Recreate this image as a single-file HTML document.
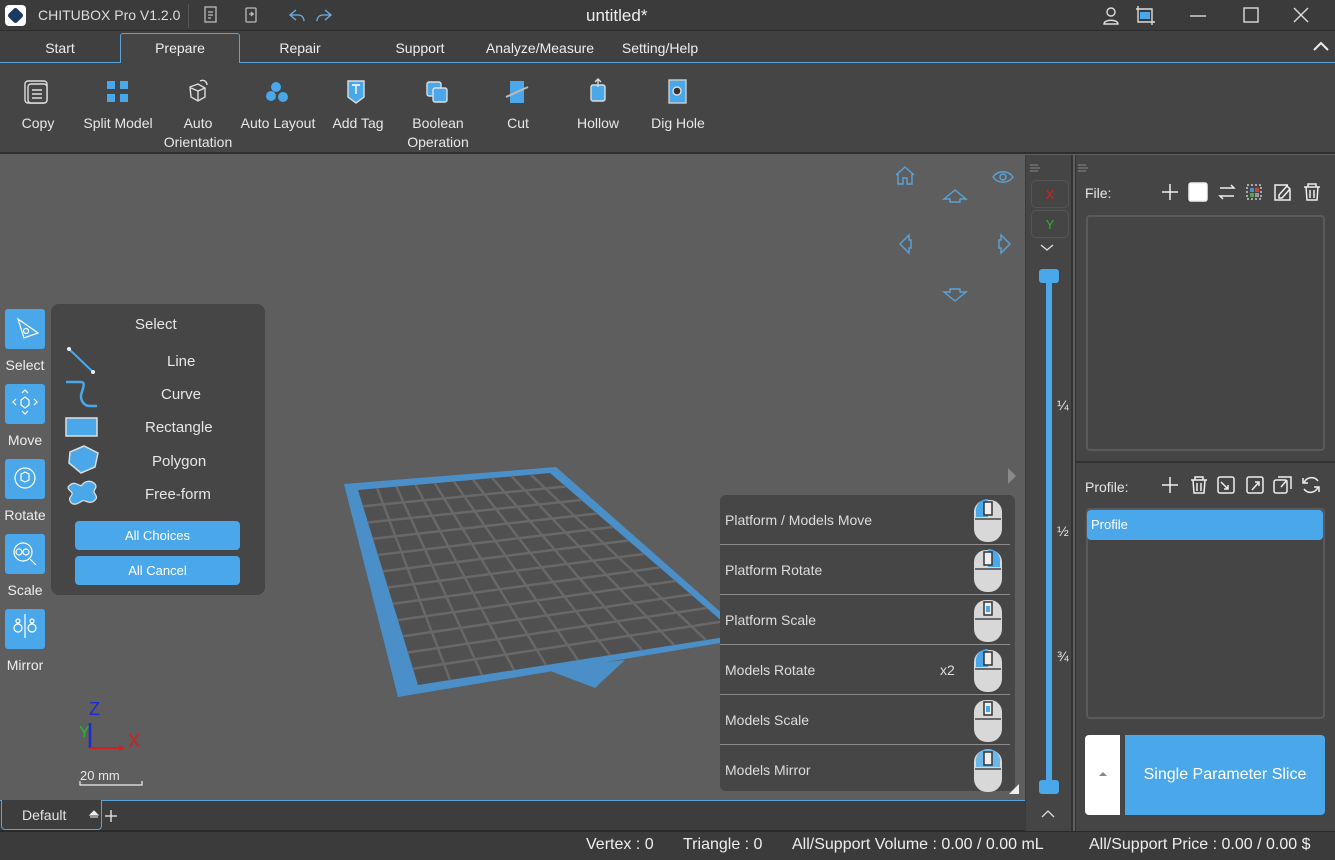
<!DOCTYPE html>
<html><head><meta charset="utf-8"><style>
*{margin:0;padding:0;box-sizing:border-box}
body{width:1335px;height:860px;overflow:hidden;background:#5e5e5e;font-family:"Liberation Sans",sans-serif;color:#e6e6e6;position:relative;font-size:14px}
.a{position:absolute}
.t{position:absolute;white-space:nowrap}
.tb{left:0;top:0;width:1335px;height:31px;background:#3b3b3b;border-bottom:1px solid #2c2c2c}
.tabs{left:0;top:31px;width:1335px;height:32px;background:#404040;border-bottom:1px solid #5aa3d8}
.tab{position:absolute;top:40px;font-size:14px;color:#eee;text-align:center;width:120px}
.tool{left:0;top:63px;width:1335px;height:91px;background:#454545;border-bottom:2px solid #2f2f2f}
.ti{position:absolute;text-align:center;font-size:14px;color:#e8e8e8;line-height:19px}
.lb{position:absolute;left:5px;width:40px;height:40px;background:#4aa8ea;border-radius:3px}
.ll{position:absolute;left:0;width:50px;text-align:center;font-size:14px;color:#eee}
.row{position:absolute;left:720px;width:290px;height:50px;border-bottom:1px solid #8a8a8a;font-size:14px;color:#ddd}
.row span{position:absolute;left:5px;top:17px}
.mouse{position:absolute;left:254px;top:5px;width:28px;height:42px;background:#d8d8d8;border-radius:12px 12px 13px 13px}
</style></head><body>
<div class="a tb"></div>
<div class="a" style="left:5px;top:5px;width:21px;height:21px;background:#fff;border-radius:4px"></div>
<div class="a" style="left:8px;top:8px;width:15px;height:15px;background:#1b3a5e;transform:rotate(45deg) scale(.8);border-radius:3px"></div>
<div class="t" style="left:38px;top:7px;font-size:14px;color:#ddd">CHITUBOX Pro V1.2.0</div>
<div class="a" style="left:188px;top:4px;width:1px;height:24px;background:#555"></div>
<svg class="a" style="left:200px;top:5px" width="150" height="22" fill="none" stroke="#bbb" stroke-width="1.3">
<rect x="5" y="2" width="11" height="15"/><path d="M8 7h5M8 10h5M8 13h3"/>
<rect x="46" y="3" width="10" height="14" rx="1"/><path d="M49 9h5M51 7l2 2-2 2"/>
<path d="M96 5l-6 5 6 5M90 10h8c4 0 6 3 6 6" stroke="#6ab0e8"/>
<path d="M125 5l6 5-6 5M131 10h-8c-4 0-6 3-6 6" stroke="#6ab0e8"/>
</svg>
<div class="t" style="left:586px;top:6px;font-size:17px;color:#eee">untitled*</div>
<svg class="a" style="left:1098px;top:4px" width="237" height="24" fill="none" stroke="#ddd" stroke-width="1.4">
<circle cx="13" cy="8" r="4"/><path d="M6 20c0-5 14-5 14 0z"/>
<path d="M40 2v16h17M38 5h16v16"/><rect x="42" y="8" width="10" height="7" fill="#4aa8ea" stroke="none"/>
<path d="M92 12h16"/><rect x="146" y="4" width="14" height="14"/><path d="M196 4l14 14M210 4l-14 14"/>
</svg>
<div class="a tabs"></div>
<div class="a" style="left:120px;top:33px;width:120px;height:31px;background:#454545;border:1px solid #5aa3d8;border-bottom:none;border-radius:3px 3px 0 0"></div>
<div class="tab" style="left:0">Start</div>
<div class="tab" style="left:120px">Prepare</div>
<div class="tab" style="left:240px">Repair</div>
<div class="tab" style="left:360px">Support</div>
<div class="tab" style="left:480px">Analyze/Measure</div>
<div class="tab" style="left:600px">Setting/Help</div>
<svg class="a" style="left:1312px;top:40px" width="18" height="12"><path d="M2 10l7-7 7 7" stroke="#eee" stroke-width="2" fill="none"/></svg>
<div class="a tool"></div>
<svg class="a" style="left:0;top:75px" width="720" height="32" fill="none" stroke="#ddd" stroke-width="1.4">
<rect x="25" y="6" width="22" height="22" rx="3"/><rect x="28" y="9" width="19" height="19" rx="3" fill="#454545"/><path d="M32 15h10M32 19h10M32 23h10"/>
<g fill="#4aa8ea" stroke="none"><rect x="107" y="6" width="8" height="8"/><rect x="120" y="6" width="8" height="8"/><rect x="107" y="19" width="8" height="8"/><rect x="120" y="19" width="8" height="8"/></g>
<path d="M190 12l8-3 7 4v9l-7 4-7-4zM191 13l7 3 7-3M198 16v10"/><path d="M200 6c4-2 7 1 7 4" /> 
<g fill="#4aa8ea" stroke="none"><circle cx="276" cy="12" r="5"/><circle cx="271" cy="21" r="5"/><circle cx="283" cy="22" r="5"/></g>
<path d="M348 6h16v16l-8 6-8-6z" fill="#4aa8ea" stroke="#ddd"/><path d="M352 10h8M356 10v9" stroke="#fff"/>
<rect x="427" y="7" width="14" height="14" rx="2" fill="#4aa8ea"/><rect x="433" y="13" width="14" height="14" rx="2" fill="#4aa8ea"/>
<rect x="510" y="6" width="14" height="22" fill="#4aa8ea" stroke="none"/><path d="M506 22l22-10" stroke="#bbb" stroke-width="2"/>
<rect x="591" y="10" width="14" height="16" rx="2" fill="#4aa8ea"/><path d="M598 4v8M595 7l3-3 3 3"/>
<rect x="669" y="5" width="17" height="23" fill="#4aa8ea" stroke="#ccc"/><circle cx="677" cy="16" r="4" fill="#333" stroke="#ddd"/>
</svg>
<div class="ti" style="left:0;width:76px;top:114px">Copy</div>
<div class="ti" style="left:78px;width:80px;top:114px">Split Model</div>
<div class="ti" style="left:158px;width:80px;top:114px">Auto<br>Orientation</div>
<div class="ti" style="left:238px;width:80px;top:114px">Auto Layout</div>
<div class="ti" style="left:318px;width:80px;top:114px">Add Tag</div>
<div class="ti" style="left:398px;width:80px;top:114px">Boolean<br>Operation</div>
<div class="ti" style="left:478px;width:80px;top:114px">Cut</div>
<div class="ti" style="left:558px;width:80px;top:114px">Hollow</div>
<div class="ti" style="left:638px;width:80px;top:114px">Dig Hole</div>
<svg class="a" style="left:0;top:155px" width="1025" height="645">
<polygon points="344,329 556,312 750,483 398,542" fill="#4a8fc8"/>
<polygon points="545,514 625,505 595,533" fill="#4a8fc8"/>
<polygon points="358,335 550,318 738,480 418,530" fill="#505050"/>
<g id="grid" stroke="#686868" stroke-width="2.5"></g>
<g fill="none" stroke="#5aa3d8" stroke-width="1.4">
<path d="M896 20l9-8 9 8M898 18v11h5v-6h4v6h5V18"/>
<path d="M944 44l11-9 11 9h-6v3h-10v-3z"/>
<path d="M944 137l11 9 11-9h-6v-3h-10v3z"/>
<path d="M909 80l-9 9 9 9v-5h2V85h-2z"/>
<path d="M1001 80l9 9-9 9v-5h-2V85h2z"/>
<path d="M993 22c5-7 15-7 20 0c-5 7-15 7-20 0z"/><circle cx="1003" cy="22" r="3"/>
</g>
<polygon points="1008,313 1016,321 1008,329" fill="#8a8a8a"/>
</svg>
<script>
(function(){var P=[[358,335],[550,318],[738,480],[418,530]];var g=document.getElementById('grid');
function L(a,b,t){return[a[0]+(b[0]-a[0])*t,a[1]+(b[1]-a[1])*t]}
var s='',n=10,m=12;
for(var i=1;i<n;i++){var t=i/n,a=L(P[0],P[1],t),b=L(P[3],P[2],t);s+='<line x1="'+a[0]+'" y1="'+a[1]+'" x2="'+b[0]+'" y2="'+b[1]+'"/>'}
for(var j=1;j<m;j++){var t=j/m,a=L(P[0],P[3],t),b=L(P[1],P[2],t);s+='<line x1="'+a[0]+'" y1="'+a[1]+'" x2="'+b[0]+'" y2="'+b[1]+'"/>'}
g.innerHTML=s;})();
</script>
<div class="lb" style="top:309px"></div><div class="ll" style="top:357px">Select</div>
<div class="lb" style="top:384px"></div><div class="ll" style="top:432px">Move</div>
<div class="lb" style="top:459px"></div><div class="ll" style="top:507px">Rotate</div>
<div class="lb" style="top:534px"></div><div class="ll" style="top:582px">Scale</div>
<div class="lb" style="top:609px"></div><div class="ll" style="top:657px">Mirror</div>
<svg class="a" style="left:5px;top:309px" width="40" height="340" fill="none" stroke="#fff" stroke-width="1.2">
<path d="M13 10l20 14-14 5z"/><circle cx="21" cy="22" r="2.5"/>
<path d="M20 88l4 3v5l-4 3-4-3v-5z"/><path d="M11 90l-3 3 3 3M29 90l3 3-3 3M17 84l3-3 3 3M17 102l3 3 3-3"/>
<circle cx="20" cy="169" r="10"/><path d="M16 165l4-2 4 2v6l-4 2-4-2z"/>
<circle cx="18" cy="243" r="9"/><path d="M25 250l6 6"/><circle cx="14" cy="243" r="3"/><circle cx="21" cy="243" r="3"/>
<path d="M20 305v24"/><circle cx="13" cy="319" r="4"/><circle cx="27" cy="319" r="4"/><circle cx="13" cy="312" r="2"/><circle cx="27" cy="312" r="2"/>
</svg>
<div class="a" style="left:51px;top:304px;width:214px;height:291px;background:#464646;border-radius:8px"></div>
<div class="t" style="left:135px;top:316px;font-size:15px">Select</div>
<div class="t" style="left:167px;top:353px;font-size:15px">Line</div>
<div class="t" style="left:161px;top:386px;font-size:15px">Curve</div>
<div class="t" style="left:145px;top:419px;font-size:15px">Rectangle</div>
<div class="t" style="left:152px;top:453px;font-size:15px">Polygon</div>
<div class="t" style="left:145px;top:486px;font-size:15px">Free-form</div>
<svg class="a" style="left:60px;top:340px" width="45" height="170">
<path d="M9 9l24 23" stroke="#4aa8ea" stroke-width="2"/><circle cx="9" cy="9" r="2" fill="#eee"/><circle cx="33" cy="32" r="2" fill="#eee"/>
<path d="M6 42h15c6 0 0 10 0 14c0 6 4 10 9 10h7" stroke="#4aa8ea" stroke-width="2.5" fill="none"/>
<rect x="6" y="78" width="31" height="18" fill="#4aa8ea" stroke="#ddd" stroke-width="1.5"/>
<path d="M10 112l14-6 14 7-3 14-14 6-12-10z" fill="#4aa8ea" stroke="#ddd" stroke-width="1.5"/>
<path d="M10 145c6-5 10 3 12 0s8-6 13-1c3 4-2 6-1 8c1 3 5 5 0 9c-5 4-9-2-12 0s-9 6-12 0c-2-4 3-5 2-8s-7-4-2-8z" fill="#4aa8ea" stroke="#ddd" stroke-width="1.3"/>
</svg>
<div class="a" style="left:75px;top:521px;width:165px;height:29px;background:#4aa8ea;border-radius:4px;text-align:center;line-height:29px;font-size:13px;color:#fff">All Choices</div>
<div class="a" style="left:75px;top:556px;width:165px;height:29px;background:#4aa8ea;border-radius:4px;text-align:center;line-height:29px;font-size:13px;color:#fff">All Cancel</div>
<svg class="a" style="left:70px;top:695px" width="80" height="100">
<text x="19" y="20" fill="#1a2bd0" font-size="18" font-family="Liberation Sans">Z</text>
<text x="9" y="42" fill="#2bb52b" font-size="16" font-family="Liberation Sans">Y</text>
<text x="58" y="52" fill="#d02020" font-size="18" font-family="Liberation Sans">X</text>
<path d="M20 28v25" stroke="#1a2bd0" stroke-width="2.5"/><path d="M20 53h30" stroke="#d02020" stroke-width="2"/><path d="M49 50l6 3-6 3z" fill="#d02020"/>
<path d="M10 86v4h62v-4" stroke="#eee" stroke-width="1.2" fill="none"/>
</svg>
<div class="t" style="left:80px;top:768px;font-size:13px">20 mm</div>
<div class="a" style="left:720px;top:495px;width:295px;height:296px;background:#464646;border-radius:6px"></div>
<div class="row" style="top:495px"><span>Platform / Models Move</span><div class="mouse"></div></div>
<div class="row" style="top:545px"><span>Platform Rotate</span><div class="mouse"></div></div>
<div class="row" style="top:595px"><span>Platform Scale</span><div class="mouse"></div></div>
<div class="row" style="top:645px"><span>Models Rotate</span><span style="left:220px">x2</span><div class="mouse"></div></div>
<div class="row" style="top:695px"><span>Models Scale</span><div class="mouse"></div></div>
<div class="row" style="top:745px;border:none"><span>Models Mirror</span><div class="mouse"></div></div>
<svg class="a" style="left:974px;top:497px" width="30" height="295">
<g stroke="#444" stroke-width="1.5">
<path d="M1 22h26"/><path d="M1 72h26"/><path d="M1 122h26"/><path d="M1 172h26"/><path d="M1 222h26"/><path d="M1 272h26"/>
</g>
<path d="M2 20v-8a12 12 0 0 1 12-10v18z" fill="#4aa8ea"/>
<path d="M26 70v-8a12 12 0 0 0-12-10v18z" fill="#4aa8ea"/>
<path d="M2 170v-8a12 12 0 0 1 12-10v18z" fill="#4aa8ea"/>
<path d="M2 270v-8a12 12 0 0 1 12-10v18zM26 270v-8a12 12 0 0 0-12-10v18z" fill="#6fb6e8"/>
<g fill="#eee" stroke="#333" stroke-width="1.5"><rect x="10" y="5" width="8" height="13"/><rect x="10" y="55" width="8" height="13"/><rect x="10" y="105" width="8" height="13"/><rect x="10" y="155" width="8" height="13"/><rect x="10" y="205" width="8" height="13"/><rect x="10" y="255" width="8" height="13"/></g>
<rect x="12" y="109" width="4" height="6" fill="#4aa8ea"/><rect x="12" y="209" width="4" height="6" fill="#4aa8ea"/>
</svg>
<svg class="a" style="left:1008px;top:783px" width="12" height="12"><path d="M11 1v10H1z" fill="#eee"/></svg>
<div class="a" style="left:0;top:800px;width:1027px;height:31px;background:#3d3d3d;border-top:1px solid #5aa3d8;border-bottom:1px solid #2a2a2a"></div>
<div class="a" style="left:1px;top:800px;width:101px;height:30px;border:1px solid #5aa3d8;border-top:none;border-radius:0 0 4px 4px;background:#3d3d3d"></div>
<div class="t" style="left:22px;top:807px;font-size:14px">Default</div>
<svg class="a" style="left:88px;top:808px" width="30" height="16"><path d="M2 7l4-4 4 4z M2 9h8" fill="#eee" stroke="#eee" stroke-width="1"/><path d="M23 2v12M17 8h12" stroke="#eee" stroke-width="1.3"/></svg>
<div class="a" style="left:1025px;top:155px;width:48px;height:676px;background:#454545;border-left:1px solid #3a3a3a;border-right:2px solid #333"></div>
<div class="a" style="left:1031px;top:180px;width:38px;height:28px;border:1px solid #555;border-radius:5px;text-align:center;color:#d42020;font-size:13px;line-height:27px">X</div>
<div class="a" style="left:1031px;top:210px;width:38px;height:28px;border:1px solid #555;border-radius:5px;text-align:center;color:#2cb52c;font-size:13px;line-height:27px">Y</div>
<svg class="a" style="left:1030px;top:160px" width="40" height="100" fill="none" stroke="#ddd" stroke-width="1.3"><path d="M11 85l6 5 6-5"/><path d="M0 5h8M0 8h10M0 11h8" stroke="#888" stroke-width="1"/></svg>
<div class="a" style="left:1046px;top:278px;width:6px;height:510px;background:#4aa8ea"></div>
<div class="a" style="left:1039px;top:269px;width:20px;height:14px;background:#4aa8ea;border-radius:3px"></div>
<div class="a" style="left:1039px;top:780px;width:20px;height:14px;background:#4aa8ea;border-radius:3px"></div>
<div class="t" style="left:1057px;top:397px;font-size:14px">¼</div>
<div class="t" style="left:1057px;top:523px;font-size:14px">½</div>
<div class="t" style="left:1057px;top:648px;font-size:14px">¾</div>
<svg class="a" style="left:1040px;top:808px" width="16" height="12"><path d="M2 9l6-6 6 6" stroke="#ddd" stroke-width="1.3" fill="none"/></svg>
<div class="a" style="left:1075px;top:155px;width:260px;height:676px;background:#454545;border-left:1px solid #333"></div>
<div class="a" style="left:1076px;top:461px;width:259px;height:2px;background:#333"></div>
<svg class="a" style="left:1078px;top:163px" width="14" height="10"><path d="M0 2h8M0 5h10M0 8h8" stroke="#888"/></svg>
<div class="t" style="left:1085px;top:185px;font-size:14px">File:</div>
<svg class="a" style="left:1158px;top:180px" width="170" height="26" fill="none" stroke="#eee" stroke-width="1.5">
<path d="M12 4v16M4 12h16"/><rect x="31" y="3" width="18" height="18" rx="2" fill="#fff"/>
<path d="M62 8h14l-3-3M76 16H62l3 3"/>
<rect x="89" y="5" width="14" height="14" stroke-dasharray="2 2" stroke="#ccc"/><rect x="92" y="8" width="4" height="4" fill="#4a8fc8" stroke="none"/><rect x="97" y="8" width="4" height="4" fill="#c04a3a" stroke="none"/><rect x="92" y="13" width="4" height="4" fill="#4aaa4a" stroke="none"/><rect x="97" y="13" width="4" height="4" fill="#999" stroke="none"/>
<path d="M130 5h-13v15h15V10M121 15l8-9 3 3-8 9h-3z"/>
<path d="M146 7h16M150 7V4h8v3M148 7l1 13h10l1-13M152 10v8M156 10v8"/>
</svg>
<div class="a" style="left:1086px;top:215px;width:239px;height:236px;border:2px solid #5a5a5a;border-radius:4px;background:#454545"></div>
<div class="t" style="left:1085px;top:479px;font-size:14px">Profile:</div>
<svg class="a" style="left:1158px;top:473px" width="170" height="26" fill="none" stroke="#eee" stroke-width="1.5">
<path d="M12 4v16M4 12h16"/>
<path d="M33 7h16M37 7V4h8v3M35 7l1 13h10l1-13M39 10v8M43 10v8"/>
<rect x="60" y="4" width="16" height="16" rx="2"/><path d="M63 9l7 7M66 16h4v-4"/>
<rect x="89" y="4" width="16" height="16" rx="2"/><path d="M94 17l7-8M97 9h4v4"/>
<rect x="116" y="7" width="13" height="13" rx="2"/><path d="M120 4h13v12M123 14l6-7"/>
<path d="M160 8a8 8 0 0 0-14 2M146 16a8 8 0 0 0 14-2M145 5v5h5M161 19v-5h-5"/>
</svg>
<div class="a" style="left:1086px;top:508px;width:239px;height:211px;border:2px solid #5a5a5a;border-radius:4px"></div>
<div class="a" style="left:1087px;top:510px;width:236px;height:30px;background:#4aa8ea;border-radius:4px"></div>
<div class="t" style="left:1091px;top:517px;font-size:13px;color:#fff">Profile</div>
<div class="a" style="left:1085px;top:735px;width:35px;height:80px;background:#fff;border-radius:4px 0 0 4px"></div>
<svg class="a" style="left:1098px;top:770px" width="10" height="8"><path d="M1 6l4-4 4 4z" fill="#888"/></svg>
<div class="a" style="left:1125px;top:735px;width:200px;height:80px;background:#4aa8ea;border-radius:0 4px 4px 0;text-align:center;line-height:80px;font-size:16px;color:#fff">Single Parameter Slice</div>
<div class="a" style="left:0;top:831px;width:1335px;height:29px;background:#3b3b3b;border-top:1px solid #2a2a2a"></div>
<div class="t" style="left:586px;top:836px;font-size:16px;color:#eee">Vertex : 0</div>
<div class="t" style="left:683px;top:836px;font-size:16px;color:#eee">Triangle : 0</div>
<div class="t" style="left:792px;top:836px;font-size:16px;color:#eee">All/Support Volume : 0.00 / 0.00 mL</div>
<div class="t" style="left:1089px;top:836px;font-size:16px;color:#eee">All/Support Price : 0.00 / 0.00 $</div>
</body></html>
